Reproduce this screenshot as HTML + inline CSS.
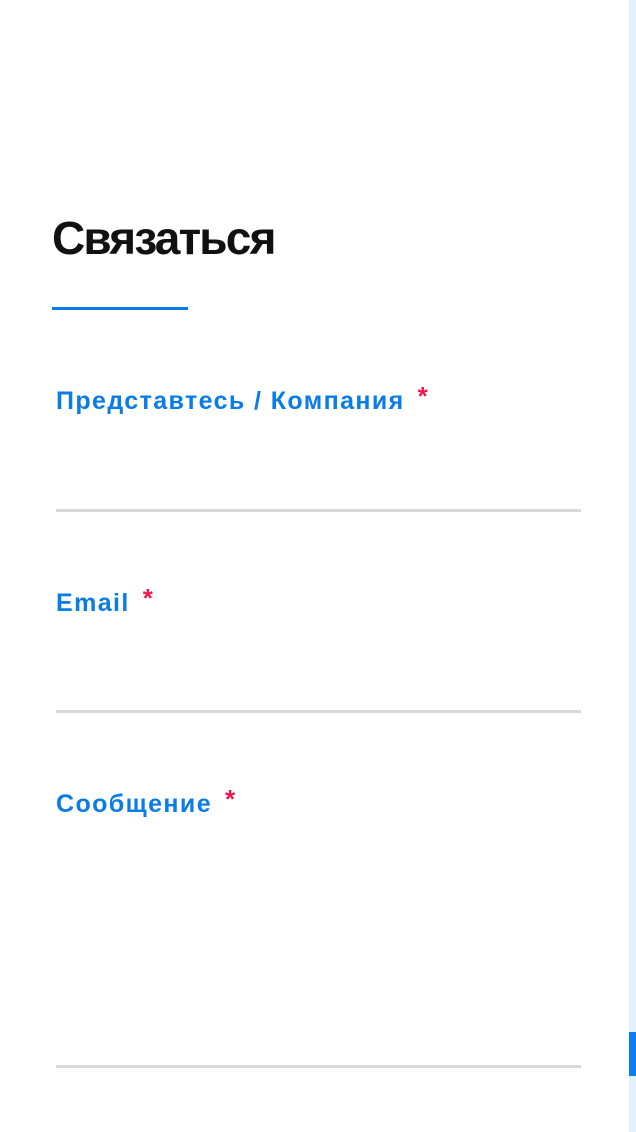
<!DOCTYPE html>
<html><head><meta charset="utf-8">
<style>
html,body{margin:0;padding:0;width:636px;height:1132px;overflow:hidden;background:#fff;font-family:"Liberation Sans","DejaVu Sans",sans-serif;}
.sb{position:absolute;left:629px;top:0;width:7px;height:1132px;background:#e3f1fc;}
.th{position:absolute;left:629px;top:1032px;width:7px;height:44px;background:#0a80f0;}
h1{position:absolute;left:52px;top:208px;margin:0;font-size:46px;font-weight:bold;color:#111;letter-spacing:-1.8px;line-height:60px;}
.ul{position:absolute;left:52px;top:307px;width:136px;height:3px;background:#0a7ce8;}
.lb{position:absolute;left:56px;margin:0;font-size:25px;font-weight:bold;color:#0a7ce8;line-height:30px;white-space:nowrap;letter-spacing:1.4px;}
.lb span{color:#f0184c;font-size:26px;vertical-align:top;margin-left:13px;position:relative;top:-5px;font-weight:bold;}
.ln{position:absolute;left:56px;width:525px;height:3px;background:#d9d9d9;}
</style></head><body>
<div class="sb"></div><div class="th"></div>
<h1>Связаться</h1>
<div class="ul"></div>
<div class="lb" style="top:386px">Представтесь / Компания<span>*</span></div>
<div class="ln" style="top:509px"></div>
<div class="lb" style="top:588px">Email<span>*</span></div>
<div class="ln" style="top:710px"></div>
<div class="lb" style="top:789px">Сообщение<span>*</span></div>
<div class="ln" style="top:1065px"></div>
</body></html>
